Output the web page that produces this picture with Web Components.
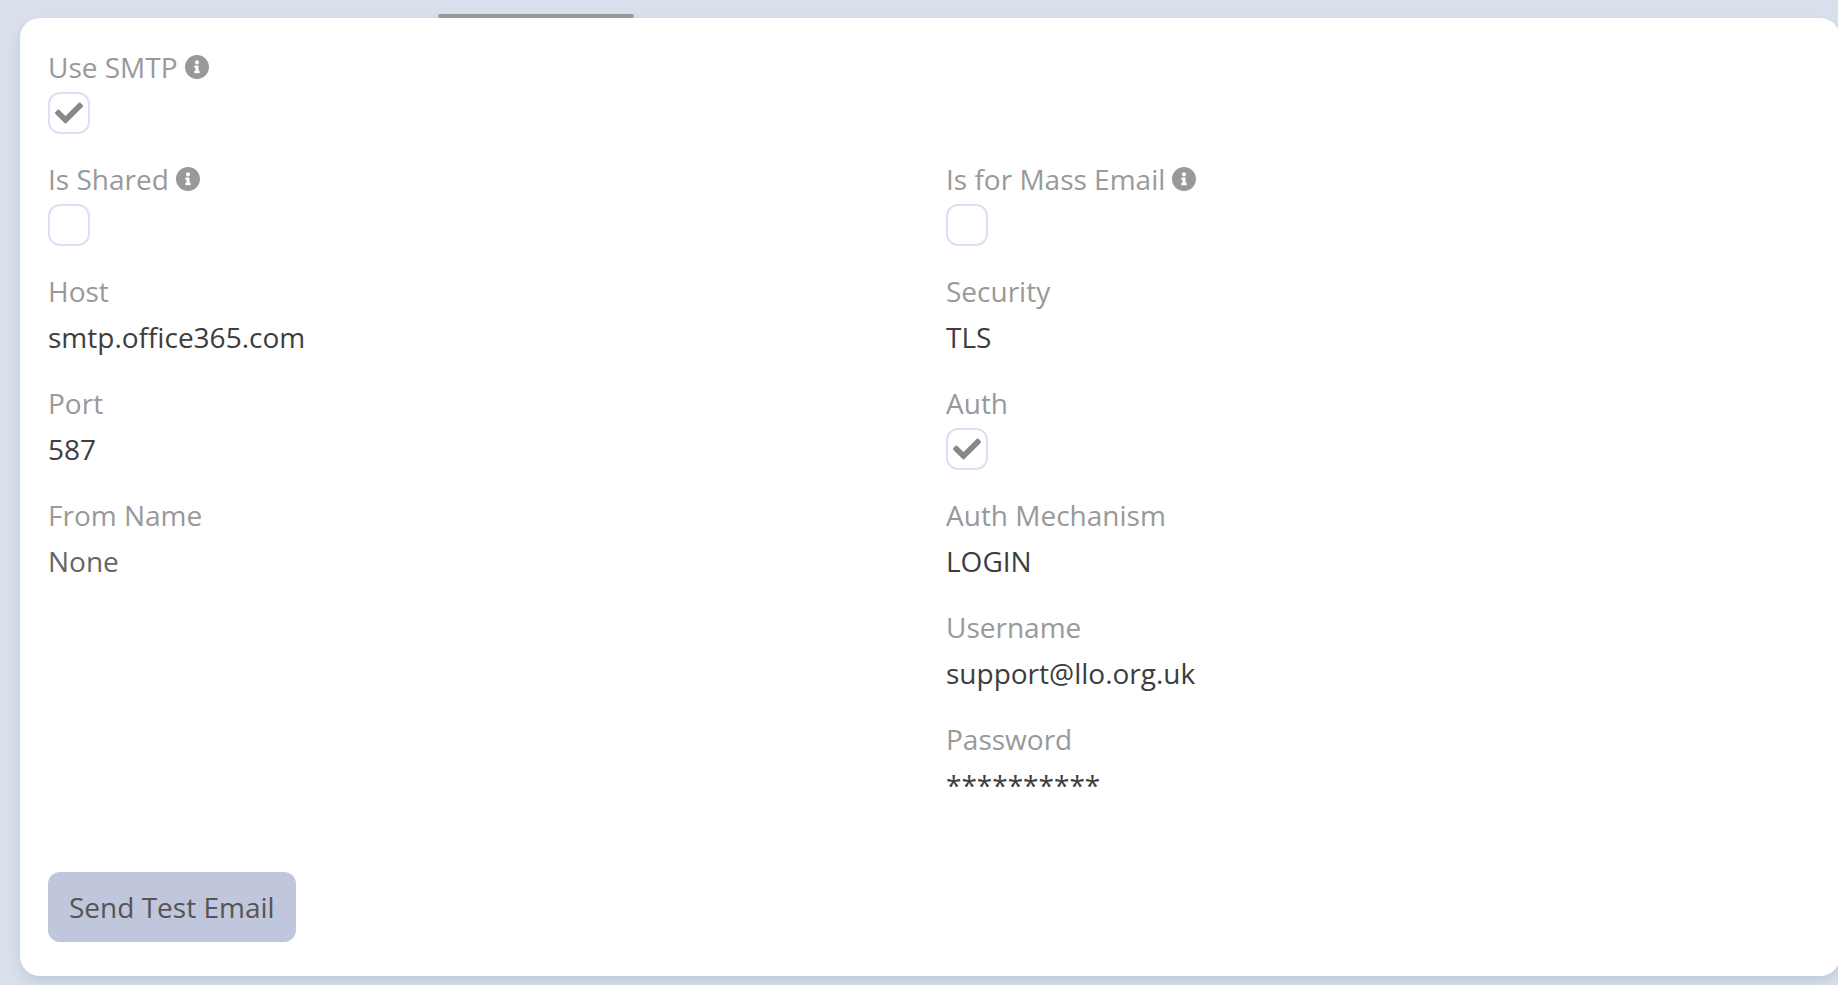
<!DOCTYPE html>
<html lang="en">
<head>
<meta charset="utf-8">
<meta name="viewport" content="width=device-width, initial-scale=1">
<title>Email Account</title>
<style>
  body {
    margin: 0;
    min-height: 100vh;
    overflow: hidden;
    background: #d9e0ec;
    color: #3d3d3d;
    font: 28px/40px "Open Sans", "Noto Sans", sans-serif;
  }
</style>
</head>
<body>
<settings-page>
  <tab-strip slot="tabs"></tab-strip>
  <settings-panel>
    <check-field label="Use SMTP" info checked></check-field>
    <check-field label="Is Shared" info class="start"></check-field>
    <check-field label="Is for Mass Email" info></check-field>
    <text-field label="Host">smtp.office365.com</text-field>
    <text-field label="Security">TLS</text-field>
    <text-field label="Port">587</text-field>
    <check-field label="Auth" checked></check-field>
    <text-field label="From Name" empty>None</text-field>
    <text-field label="Auth Mechanism">LOGIN</text-field>
    <text-field label="Username" class="end">support@llo.org.uk</text-field>
    <text-field label="Password" class="end">**********</text-field>
    <action-button slot="actions">Send Test Email</action-button>
  </settings-panel>
</settings-page>

<script>
  const define = (name, html, setup) => {
    const template = document.createElement("template");
    template.innerHTML = html;
    customElements.define(name, class extends HTMLElement {
      constructor() {
        super();
        this.attachShadow({ mode: "open" }).append(template.content.cloneNode(true));
      }
      connectedCallback() {
        if (setup) setup(this, this.shadowRoot);
      }
    });
  };

  define("settings-page", `
    <style>
      :host { display: block; }
      main { display: block; margin: 0 -2px 0 20px; }
    </style>
    <slot name="tabs"></slot>
    <main><slot></slot></main>`);

  define("tab-strip", `
    <style>
      :host { display: flex; padding: 14px 0 0 438px; }
      .active { width: 196px; height: 4px; border-radius: 2px; background: #999; }
    </style>
    <div class="active"></div>`);

  define("settings-panel", `
    <style>
      :host {
        display: block;
        padding: 29px 28px 34px;
        border-radius: 20px;
        background: #fff;
        box-shadow: 0 6px 12px rgba(100, 130, 160, .22);
      }
      .fields {
        display: grid;
        grid-template-columns: 1fr 1fr;
        gap: 25px 32px;
      }
      ::slotted(.start) { grid-column: 1; }
      ::slotted(.end) { grid-column: 2; }
      .actions { display: flex; margin-top: 66px; }
    </style>
    <div class="fields"><slot></slot></div>
    <div class="actions"><slot name="actions"></slot></div>`);

  define("info-icon", `
    <style>
      :host { display: block; width: 24px; height: 24px; color: #999; }
      svg { display: block; width: 100%; height: 100%; fill: currentColor; }
    </style>
    <svg viewBox="8 8 496 496" aria-hidden="true"><path d="M256 8C119.043 8 8 119.083 8 256c0 136.997 111.043 248 248 248s248-111.003 248-248C504 119.083 392.957 8 256 8zm0 110c23.196 0 42 18.804 42 42s-18.804 42-42 42-42-18.804-42-42 18.804-42 42-42zm56 254c0 6.627-5.373 12-12 12h-88c-6.627 0-12-5.373-12-12v-24c0-6.627 5.373-12 12-12h12v-64h-12c-6.627 0-12-5.373-12-12v-24c0-6.627 5.373-12 12-12h64c6.627 0 12 5.373 12 12v100h12c6.627 0 12 5.373 12 12v24z"/></svg>`);

  define("check-field", `
    <style>
      :host { display: flex; flex-direction: column; gap: 5px; }
      .head { display: flex; align-items: center; gap: 7px; color: #999; }
      info-icon[hidden] { display: none; }
      .box { display: grid; width: 42px; height: 42px; place-items: center; }
      input, svg { grid-area: 1 / 1; }
      input {
        appearance: none;
        box-sizing: border-box;
        width: 100%;
        height: 100%;
        margin: 0;
        border: 2px solid #dce0f2;
        border-radius: 12px;
        background: #fff;
      }
      svg { width: 28px; height: 28px; fill: #888; pointer-events: none; visibility: hidden; }
      input:checked + svg { visibility: visible; }
    </style>
    <div class="head"><label for="control"></label><info-icon></info-icon></div>
    <div class="box">
      <input type="checkbox" id="control">
      <svg viewBox="0 0 512 512" aria-hidden="true"><path d="M173.898 439.404l-166.4-166.4c-9.997-9.997-9.997-26.206 0-36.204l36.203-36.204c9.997-9.998 26.207-9.998 36.204 0L192 312.69 432.095 72.596c9.997-9.997 26.207-9.997 36.204 0l36.203 36.204c9.997 9.997 9.997 26.206 0 36.204l-294.4 294.401c-9.998 9.997-26.207 9.997-36.204-.001z"/></svg>
    </div>`,
    (host, root) => {
      root.querySelector("label").textContent = host.getAttribute("label");
      root.querySelector("info-icon").hidden = !host.hasAttribute("info");
      root.querySelector("input").checked = host.hasAttribute("checked");
    });

  define("text-field", `
    <style>
      :host { display: block; }
      dl, dd { margin: 0; }
      dl { display: flex; flex-direction: column; gap: 5px; }
      dt { color: #999; }
      dd { line-height: 42px; }
      :host([empty]) dd { color: #666; }
    </style>
    <dl><dt></dt><dd><slot></slot></dd></dl>`,
    (host, root) => {
      root.querySelector("dt").textContent = host.getAttribute("label");
    });

  define("action-button", `
    <style>
      :host { display: block; }
      button {
        display: block;
        margin: 0;
        padding: 15px 21px;
        border: 0;
        border-radius: 12px;
        background: #c0c6dc;
        color: #555;
        font: inherit;
        cursor: pointer;
      }
    </style>
    <button type="button"><slot></slot></button>`);
</script>
</body>
</html>
